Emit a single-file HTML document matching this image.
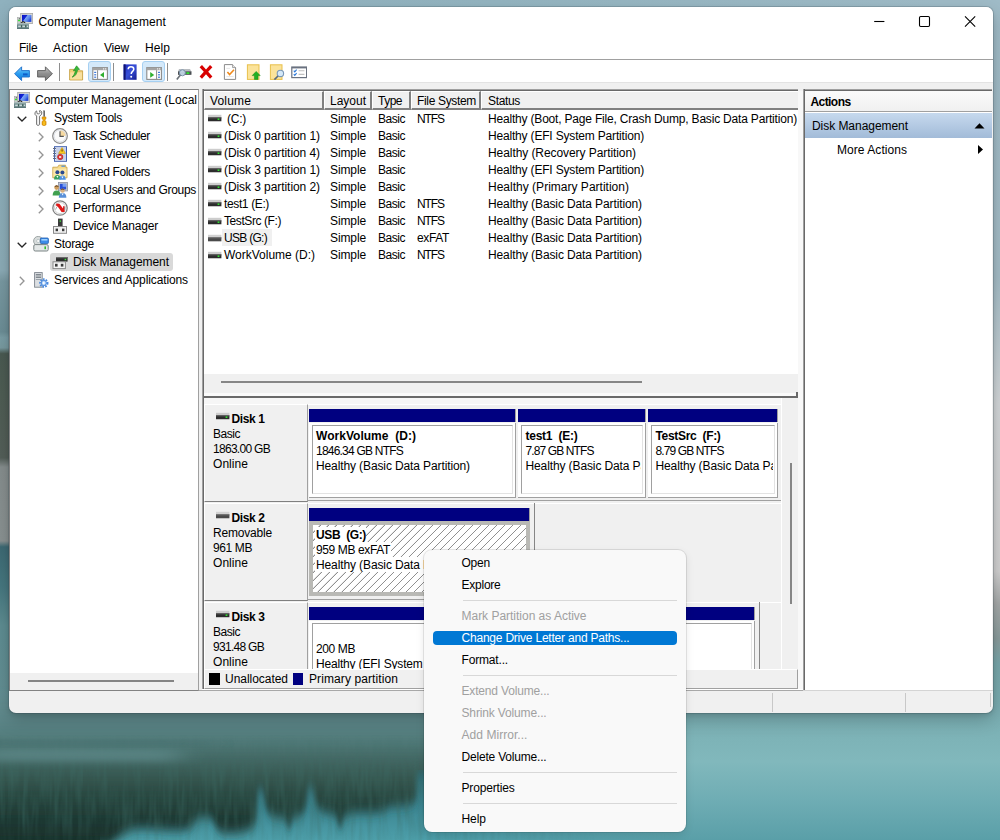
<!DOCTYPE html>
<html><head><meta charset="utf-8"><title>Computer Management</title>
<style>
html,body{margin:0;padding:0;}
body{width:1000px;height:840px;overflow:hidden;position:relative;background:#7fa5ad;font-family:"Liberation Sans",sans-serif;font-size:12px;color:#000;}
.a{position:absolute;}
.t{position:absolute;white-space:nowrap;line-height:16px;height:16px;}
#wp{left:0;top:0;width:1000px;height:840px;}
#frame{left:9px;top:7px;width:984px;height:706px;border-radius:7px;background:#f0f0f0;box-shadow:0 0 0 1px rgba(40,60,70,.20),0 7px 18px rgba(0,0,0,.20),0 2px 4px rgba(0,0,0,.10);}
#win,#menu,#clip3{left:0;top:0;width:1000px;height:840px;}
#clip3{clip-path:inset(404px 218px 171px 204px);}
.w{background:#fff;}

.hc{position:absolute;top:91px;height:19px;box-sizing:border-box;background:#f0f0f0;border-top:1px solid #fff;border-left:1px solid #fff;border-right:2px solid #808080;border-bottom:2px solid #808080;}
.dl{position:absolute;left:204px;width:104px;height:98px;box-sizing:border-box;background:#f0f0f0;border-left:1px solid #fff;border-top:1px solid #fff;border-right:1px solid #a0a0a0;border-bottom:1px solid #808080;}
.ph{position:absolute;height:13px;background:#000080;border-right:1px solid #a0a0a0;box-sizing:border-box;}
.pb{position:absolute;height:75px;background:#fff;box-sizing:border-box;border-right:1px solid #a0a0a0;border-bottom:1px solid #a0a0a0;}
.pb i{position:absolute;left:3px;top:2px;right:2px;bottom:3px;border-left:1px solid #a0a0a0;border-top:1px solid #a0a0a0;border-right:1px solid #e3e3e3;border-bottom:1px solid #e3e3e3;}
.pbh{position:absolute;height:75px;box-sizing:border-box;border:4px solid #b9b9b5;background:#fff repeating-linear-gradient(135deg,#fff 0,#fff 4.9px,#909090 5px,#909090 5.66px);}
.ms{position:absolute;left:463px;width:214px;height:1px;background:#d8d8d8;}
</style></head><body>
<div id="wp" class="a"><svg width="1000" height="840" viewBox="0 0 1000 840" style="position:absolute;left:0;top:0">
<defs>
<linearGradient id="wsky" x1="0" y1="0" x2="1" y2="0"><stop offset="0" stop-color="#8fb1be"/><stop offset=".5" stop-color="#93b4c0"/><stop offset="1" stop-color="#a0bcc8"/></linearGradient>
<linearGradient id="wleft" x1="0" y1="0" x2="0" y2="1">
<stop offset="0" stop-color="#8fb1be"/><stop offset=".322" stop-color="#8cacb7"/><stop offset=".335" stop-color="#7999a2"/><stop offset=".395" stop-color="#6c8e96"/><stop offset=".402" stop-color="#7a9ea6"/><stop offset=".414" stop-color="#789aa0"/><stop offset=".421" stop-color="#4a5a52"/><stop offset=".47" stop-color="#4f5d54"/><stop offset=".545" stop-color="#545f59"/><stop offset=".556" stop-color="#868e8e"/><stop offset=".644" stop-color="#8a9292"/><stop offset=".651" stop-color="#3d6a74"/><stop offset=".70" stop-color="#477880"/><stop offset=".745" stop-color="#5e8d92"/><stop offset=".85" stop-color="#648f93"/><stop offset="1" stop-color="#5e898c"/></linearGradient>
<linearGradient id="wright" x1="0" y1="0" x2="0" y2="1">
<stop offset="0" stop-color="#9fbbc7"/><stop offset=".33" stop-color="#a4bcc6"/><stop offset=".48" stop-color="#d2d6d8"/><stop offset=".68" stop-color="#d0d0d0"/><stop offset=".72" stop-color="#a4a8a8"/><stop offset=".76" stop-color="#8a9c9c"/><stop offset=".79" stop-color="#78a6aa"/><stop offset=".86" stop-color="#7aaeb2"/><stop offset="1" stop-color="#80b4b8"/></linearGradient>
<linearGradient id="wbotL" gradientUnits="userSpaceOnUse" x1="0" y1="705" x2="0" y2="840">
<stop offset="0" stop-color="#628c8f"/><stop offset=".15" stop-color="#5a8486"/><stop offset=".3" stop-color="#4d7674"/><stop offset=".41" stop-color="#426662"/><stop offset=".52" stop-color="#375952"/><stop offset=".63" stop-color="#2d4c45"/><stop offset=".74" stop-color="#24413a"/><stop offset=".85" stop-color="#1e3832"/><stop offset="1" stop-color="#19312b"/></linearGradient>
<linearGradient id="wbotR" gradientUnits="userSpaceOnUse" x1="0" y1="705" x2="0" y2="840">
<stop offset="0" stop-color="#79abb0"/><stop offset=".14" stop-color="#7bb0b4"/><stop offset=".42" stop-color="#81b8bc"/><stop offset=".7" stop-color="#6fadb4"/><stop offset="1" stop-color="#5a9fa8"/></linearGradient>
<linearGradient id="wteal" gradientUnits="userSpaceOnUse" x1="0" y1="770" x2="0" y2="840">
<stop offset="0" stop-color="#2f6a73"/><stop offset=".5" stop-color="#3b8490"/><stop offset="1" stop-color="#4d9faa"/></linearGradient>
<linearGradient id="wfade" gradientUnits="userSpaceOnUse" x1="430" y1="0" x2="690" y2="0"><stop offset="0" stop-color="#fff" stop-opacity="0"/><stop offset="1" stop-color="#fff" stop-opacity="1"/></linearGradient>
<linearGradient id="wfadeL" gradientUnits="userSpaceOnUse" x1="0" y1="0" x2="330" y2="0"><stop offset="0" stop-color="#6a979b" stop-opacity=".55"/><stop offset="1" stop-color="#6a979b" stop-opacity="0"/></linearGradient>
<mask id="wm"><rect x="420" y="700" width="580" height="140" fill="url(#wfade)"/></mask>
<filter id="wb6" x="-10%" y="-30%" width="120%" height="160%"><feGaussianBlur stdDeviation="2.2 6"/></filter>
<filter id="wb3" x="-20%" y="-100%" width="140%" height="300%"><feGaussianBlur stdDeviation="14 3.5"/></filter>
<filter id="wn" x="0" y="0" width="100%" height="100%"><feTurbulence type="fractalNoise" baseFrequency="0.22 0.025" numOctaves="2" seed="7"/><feColorMatrix type="matrix" values="0 0 0 0 0.05  0 0 0 0 0.16  0 0 0 0 0.14  1.6 0 0 0 -0.55"/></filter>
<linearGradient id="wnf" gradientUnits="userSpaceOnUse" x1="0" y1="735" x2="0" y2="840"><stop offset="0" stop-color="#fff" stop-opacity="0"/><stop offset=".35" stop-color="#fff" stop-opacity="1"/><stop offset=".8" stop-color="#fff" stop-opacity="1"/><stop offset="1" stop-color="#fff" stop-opacity=".5"/></linearGradient>
<linearGradient id="wnx" gradientUnits="userSpaceOnUse" x1="400" y1="0" x2="600" y2="0"><stop offset="0" stop-color="#000" stop-opacity="0"/><stop offset="1" stop-color="#000" stop-opacity="1"/></linearGradient>
<mask id="wnm"><rect x="0" y="735" width="700" height="105" fill="url(#wnf)"/><rect x="400" y="735" width="300" height="105" fill="url(#wnx)"/></mask>
</defs>
<rect width="1000" height="840" fill="url(#wsky)"/>
<rect x="0" y="0" width="60" height="840" fill="url(#wleft)"/>
<rect x="940" y="0" width="60" height="840" fill="url(#wright)"/>
<!-- bottom water -->
<rect x="0" y="705" width="1000" height="135" fill="url(#wbotL)"/>
<rect x="0" y="705" width="330" height="70" fill="url(#wfadeL)"/>
<rect x="100" y="770" width="600" height="70" fill="url(#wteal)"/>
<!-- dark reflection silhouette -->
<path filter="url(#wb6)" fill="url(#wbotL)" d="M-20 700 L720 700 L720 762 L470 766 L424 770 L417 772 L416 800 C412 806 396 806 390 806 C386 812 372 813 362 812 C352 812 346 814 343 818 L342 826 L338 826 L337 816 C330 812 320 812 316 806 L313 788 L308 786 L306 808 C302 816 296 817 292 817 L291 827 L287 827 L286 818 C278 818 268 816 266 808 L263 790 L258 788 L256 822 C250 832 236 834 222 832 C216 830 214 822 212 819 C206 816 200 817 196 820 C192 828 186 830 176 830 C160 830 148 827 132 829 C124 832 118 838 108 846 L-20 846 Z"/>
<rect x="0" y="705" width="1000" height="135" fill="url(#wbotR)" mask="url(#wm)"/>
<g mask="url(#wnm)"><rect x="0" y="735" width="700" height="105" filter="url(#wn)" opacity=".5"/></g>
<!-- streaks -->
<rect x="-20" y="749" width="200" height="13" fill="#74a4a8" opacity=".38" filter="url(#wb3)"/>
<rect x="-20" y="742" width="230" height="3" fill="#3f6466" opacity=".4" filter="url(#wb3)"/>
</svg>
</div>
<div id="frame" class="a"></div>
<div id="win" class="a">
<!-- title + menu + toolbar -->
<div class="a w" style="left:9px;top:7px;width:984px;height:52px;border-radius:7px 7px 0 0"></div>
<div class="a" style="left:9px;top:59px;width:984px;height:1px;background:#a0a0a0"></div>
<div class="a w" style="left:9px;top:60px;width:984px;height:22px"></div>
<div class="a" style="left:9px;top:82px;width:984px;height:1px;background:#e3e3e3"></div>
<svg class="a" style="left:17px;top:13px" width="16" height="16" viewBox="0 0 16 16"><defs><linearGradient id="gsca" x1="0" y1="0" x2="1" y2=".55"><stop offset="0" stop-color="#0a12c4"/><stop offset=".42" stop-color="#1426d4"/><stop offset=".5" stop-color="#7ea6f4"/><stop offset=".75" stop-color="#5c88ec"/><stop offset="1" stop-color="#2448d8"/></linearGradient></defs><rect x="3.7" y="0.4" width="12" height="10" fill="#dadad6" stroke="#a4a4a4" stroke-width=".8"/><rect x="5" y="1.9" width="9.4" height="7" fill="url(#gsca)"/><rect x="0.3" y="4.4" width="3" height="6" fill="#cacccc" stroke="#9aa0a0" stroke-width=".5"/><rect x="1.9" y="5.3" width="1" height="1" fill="#4a4a4a"/><rect x="1" y="6.8" width="2" height="1.4" fill="#38e038"/><path d="M3 10.5 L5.4 8.2 L7 8.2 L9.2 10.5 L7.6 10.5 L6.4 9.3 L5.9 9.3 L4.6 10.5 Z" fill="#26261e"/><rect x="0" y="10.2" width="11.9" height="5.8" fill="#6c898b"/><rect x="0" y="10.2" width="11.9" height="1.2" fill="#b4c4c4"/><rect x="0" y="15.2" width="11.9" height=".8" fill="#587274"/><rect x="1.2" y="12.6" width="2.6" height="1.5" fill="#c8d8d8"/><rect x="5.4" y="12.6" width="2.6" height="1.5" fill="#c8d8d8"/><rect x="9.5" y="12.6" width="1.6" height="1.5" fill="#c8d8d8"/><rect x="4" y="12.2" width="1" height="2.2" fill="#385a50"/><rect x="8.3" y="12.2" width="1" height="2.2" fill="#385a50"/></svg>
<svg class="a" style="left:870px;top:12px" width="110" height="20" viewBox="0 0 110 20"><path d="M4.2 9.5 H14.4" stroke="#000" stroke-width="1.1"/><rect x="49.5" y="4.5" width="10" height="10" rx="1.2" fill="none" stroke="#000" stroke-width="1.1"/><path d="M95 4.4 L105.2 14.6 M105.2 4.4 L95 14.6" stroke="#000" stroke-width="1.1"/></svg>
<svg class="a" style="left:14px;top:64.5px" width="16" height="16" viewBox="0 0 16 16"><defs><linearGradient id="gbk" x1="0" y1="0" x2="0" y2="1"><stop offset="0" stop-color="#7ed0fa"/><stop offset=".5" stop-color="#2a9cf0"/><stop offset="1" stop-color="#1478d8"/></linearGradient></defs><path d="M0.6 8.8 L7.6 1.8 L7.6 5.6 L15.4 5.6 L15.4 12 L7.6 12 L7.6 15.6 Z" fill="url(#gbk)" stroke="#1a6cc8" stroke-width=".9" stroke-linejoin="round"/><rect x="9" y="8.4" width="4.6" height="2" fill="#0a50c0" opacity=".8"/></svg>
<svg class="a" style="left:37px;top:64.5px" width="16" height="16" viewBox="0 0 16 16"><defs><linearGradient id="gfw" x1="0" y1="0" x2="0" y2="1"><stop offset="0" stop-color="#c8c8c8"/><stop offset=".5" stop-color="#8e8e8e"/><stop offset="1" stop-color="#787878"/></linearGradient></defs><path d="M15.4 8.8 L8.4 1.8 L8.4 5.6 L0.6 5.6 L0.6 12 L8.4 12 L8.4 15.6 Z" fill="url(#gfw)" stroke="#5a5a5a" stroke-width=".9" stroke-linejoin="round"/></svg>
<div class="a" style="left:59px;top:63px;width:1px;height:18px;background:#8e8e8e"></div>
<div class="a" style="left:113px;top:63px;width:1px;height:18px;background:#8e8e8e"></div>
<div class="a" style="left:167px;top:63px;width:1px;height:18px;background:#8e8e8e"></div>
<svg class="a" style="left:68px;top:64.5px" width="16" height="16" viewBox="0 0 16 16"><path d="M1.6 4.4 L6.2 4.4 L7.4 5.8 L14.6 5.8 L14.6 15 L1.6 15 Z" fill="#f2cf78" stroke="#c29a3a" stroke-width=".8"/><rect x="2.2" y="7.4" width="11.8" height="7" fill="#f8e0a0"/><path d="M4 12.2 C6 11 6.6 8 7.6 5.4 L5.4 5.8 L8.6 0.8 L11.6 4.4 L9.6 4.6 C9 8.4 7.6 11.4 4 12.2 Z" fill="#38b838" stroke="#1c8a1c" stroke-width=".6"/></svg>
<div class="a" style="left:88px;top:61px;width:23px;height:21px;box-sizing:border-box;background:#d4e9fa;border:1px solid #a6d0f2;border-radius:3px"></div>
<div class="a" style="left:142px;top:61px;width:23px;height:21px;box-sizing:border-box;background:#d4e9fa;border:1px solid #a6d0f2;border-radius:3px"></div>
<svg class="a" style="left:92px;top:65px" width="16" height="16" viewBox="0 0 16 16"><rect x="0.8" y="2.6" width="14.6" height="11.8" fill="#fff" stroke="#8a8a8a" stroke-width="1.1"/><rect x="0.8" y="2.6" width="14.6" height="2.6" fill="#a4a4a4"/><rect x="11" y="3.4" width="1.2" height="1" fill="#fff"/><rect x="13" y="3.4" width="1.2" height="1" fill="#fff"/><path d="M5.6 5.2 V14.4" stroke="#8a8a8a" stroke-width="1"/><g fill="#3c78d8"><rect x="2.2" y="6.8" width="2" height="1.2"/><rect x="2.2" y="9.2" width="2" height="1.2"/><rect x="2.2" y="11.6" width="2" height="1.2"/></g><path d="M12 7 L12 12.8 L8 9.9 Z" fill="#30b030"/></svg>
<svg class="a" style="left:121.5px;top:64px" width="16" height="16" viewBox="0 0 16 16"><defs><linearGradient id="ghlc" x1="0" y1="0" x2="1" y2="1"><stop offset="0" stop-color="#1c2cc0"/><stop offset=".5" stop-color="#3850d8"/><stop offset="1" stop-color="#141c90"/></linearGradient></defs><rect x="1.6" y="0.4" width="13" height="15.4" fill="url(#ghlc)"/><rect x="1.6" y="0.4" width="2" height="15.4" fill="#101470"/><path d="M6.2 5.2 C6.2 2 11.8 2 11.8 5.2 C11.8 7.4 9.2 7.4 9.2 10" fill="none" stroke="#fff" stroke-width="1.5"/><circle cx="9.2" cy="12.8" r="1" fill="#fff"/></svg>
<svg class="a" style="left:146px;top:65px" width="16" height="16" viewBox="0 0 16 16"><rect x="0.8" y="2.6" width="14.6" height="11.8" fill="#fff" stroke="#8a8a8a" stroke-width="1.1"/><rect x="0.8" y="2.6" width="14.6" height="2.6" fill="#a4a4a4"/><rect x="11" y="3.4" width="1.2" height="1" fill="#fff"/><rect x="13" y="3.4" width="1.2" height="1" fill="#fff"/><path d="M10.6 5.2 V14.4" stroke="#8a8a8a" stroke-width="1"/><g fill="#3c78d8"><rect x="12" y="6.8" width="2" height="1.2"/><rect x="12" y="9.2" width="2" height="1.2"/><rect x="12" y="11.6" width="2" height="1.2"/></g><path d="M4.2 7 L4.2 12.8 L8.2 9.9 Z" fill="#30b030"/></svg>
<svg class="a" style="left:176px;top:64.5px" width="16" height="16" viewBox="0 0 16 16"><path d="M3 4 L14 4 L15.4 6.4 L15.4 9.4 L2 9.4 L2 6.4 Z" fill="#b8bcc0"/><rect x="2" y="6.4" width="13.4" height="3.4" fill="#4a4e52"/><rect x="10.4" y="7.2" width="3" height="1.8" fill="#30e030"/><circle cx="6.4" cy="7.8" r="3" fill="#cfe4f6" fill-opacity=".85" stroke="#7890a8" stroke-width="1"/><path d="M4.4 10 L0.8 14.6" stroke="#6a7076" stroke-width="1.6"/></svg>
<svg class="a" style="left:198.4px;top:64px" width="16" height="16" viewBox="0 0 16 16"><path d="M1.6 3.2 L4 1 L8 5.4 L12 1 L14.4 3.2 L10.2 7.8 L14.4 12.6 L12 14.8 L8 10.2 L4 14.8 L1.6 12.6 L5.8 7.8 Z" fill="#d80000"/></svg>
<svg class="a" style="left:221.6px;top:64px" width="16" height="16" viewBox="0 0 16 16"><path d="M2.4 0.6 L10.6 0.6 L13.6 3.6 L13.6 15.4 L2.4 15.4 Z" fill="#fff" stroke="#8a8a8a" stroke-width="1"/><path d="M10.6 0.6 L10.6 3.6 L13.6 3.6" fill="#e8e8e8" stroke="#8a8a8a" stroke-width=".8"/><path d="M5.4 8 L7.6 10.6 L12 5.8" fill="none" stroke="#f08a1c" stroke-width="1.6"/><path d="M4.4 12.6 H11.6 M4.4 4.4 H8" stroke="#e0e0e0" stroke-width=".8"/></svg>
<svg class="a" style="left:246px;top:64px" width="16" height="16" viewBox="0 0 16 16"><rect x="1.4" y="0.8" width="11.6" height="14.6" fill="#fbe39a" stroke="#e8c04c" stroke-width="1"/><path d="M10.2 7.4 L14.2 11.6 L12 11.6 L12 15.4 L8.4 15.4 L8.4 11.6 L6.2 11.6 Z" fill="#22b022" stroke="#148a14" stroke-width=".5"/></svg>
<svg class="a" style="left:268.8px;top:64px" width="16" height="16" viewBox="0 0 16 16"><rect x="1.4" y="0.8" width="11.6" height="14.6" fill="#fbe39a" stroke="#e8c04c" stroke-width="1"/><circle cx="11.4" cy="9.4" r="3.2" fill="#d4e8f8" stroke="#7a98b8" stroke-width="1.1"/><path d="M9 12 L5.4 15.6" stroke="#5a6a7a" stroke-width="1.7"/></svg>
<svg class="a" style="left:291px;top:64px" width="16" height="16" viewBox="0 0 16 16"><rect x="0.8" y="3" width="14.8" height="10.6" fill="#fff" stroke="#6a7280" stroke-width="1.2"/><rect x="0.8" y="3" width="14.8" height="1.4" fill="#6a7280"/><path d="M2.8 6.6 L3.8 7.8 L5.6 5.6 M2.8 10.2 L3.8 11.4 L5.6 9.2" fill="none" stroke="#2a78d8" stroke-width="1.1"/><path d="M7.6 6.8 H13.4 M7.6 10.4 H13.4" stroke="#c0c0c0" stroke-width="1.1"/></svg>
<!-- tree pane -->
<div class="a w" style="left:9px;top:89px;width:190px;height:584px;border-left:1px solid #828282;border-top:1px solid #828282;border-right:1px solid #a0a0a0;box-sizing:border-box"></div>
<div class="a" style="left:9px;top:673px;width:190px;height:18px;border-left:1px solid #828282;border-right:1px solid #a0a0a0;border-bottom:1px solid #828282;box-sizing:border-box;background:#f0f0f0"></div>
<div class="a" style="left:28px;top:680px;width:146px;height:2px;background:#858585"></div>
<div class="a" style="left:50px;top:253px;width:123px;height:18px;background:#d9d9d9;border-radius:3px"></div>
<!-- list pane -->
<!-- list+disk container sunken border -->
<div class="a" style="left:202px;top:89px;width:596px;height:2px;background:linear-gradient(#a0a0a0 50%,#696969 50%)"></div>
<div class="a" style="left:202px;top:89px;width:2px;height:601px;background:linear-gradient(90deg,#a0a0a0 50%,#696969 50%)"></div>
<div class="a" style="left:798px;top:91px;width:5px;height:598px;background:#f8f8f8"></div>
<div class="a w" style="left:204px;top:91px;width:594px;height:283px"></div>
<!-- header cells -->
<div class="hc" style="left:204px;width:120px"></div>
<div class="hc" style="left:324px;width:48px"></div>
<div class="hc" style="left:372px;width:39px"></div>
<div class="hc" style="left:411px;width:70px"></div>
<div class="hc" style="left:481px;width:317px;border-right:0"></div>
<!-- USB row highlight -->
<div class="a" style="left:222px;top:229px;width:50px;height:17px;background:#f0f0f0"></div>
<!-- h scrollbar -->
<div class="a" style="left:204px;top:374px;width:594px;height:19px;background:#f0f0f0"></div>
<div class="a" style="left:221px;top:381px;width:421px;height:2px;background:#868686"></div>
<!-- splitter -->
<div class="a" style="left:204px;top:393px;width:592px;height:3px;background:#fafafa"></div>
<div class="a" style="left:204px;top:396px;width:594px;height:2px;background:#696969"></div>
<div class="a" style="left:796px;top:392px;width:2px;height:6px;background:#696969"></div>

<!-- actions pane -->
<div class="a" style="left:803px;top:89px;width:189px;height:2px;background:linear-gradient(#a0a0a0 50%,#696969 50%)"></div>
<div class="a" style="left:803px;top:89px;width:2px;height:601px;background:linear-gradient(90deg,#a0a0a0 50%,#696969 50%)"></div>
<div class="a w" style="left:805px;top:91px;width:187px;height:599px"></div>
<div class="a" style="left:805px;top:91px;width:187px;height:20px;background:linear-gradient(#fafafa,#f0f0f0)"></div>
<div class="a" style="left:805px;top:111px;width:187px;height:1px;background:#a0a0a0"></div>
<div class="a" style="left:805px;top:113px;width:187px;height:25px;background:linear-gradient(#c6d9ee,#a2bbd8)"></div>
<svg class="a" style="left:974px;top:123px" width="12" height="6" viewBox="0 0 12 6"><path d="M0.5 5.5 L5.5 0.3 L10.5 5.5 Z" fill="#000"/></svg>
<svg class="a" style="left:978px;top:145px" width="6" height="10" viewBox="0 0 6 10"><path d="M0 0 L5 4.5 L0 9 Z" fill="#000"/></svg>

<!-- disk view -->
<div class="a" style="left:204px;top:398px;width:594px;height:271px;background:#f0f0f0"></div>
<div class="a" style="left:204px;top:398px;width:577px;height:6px;background:#f6f6f6"></div>
<div class="a" style="left:781px;top:398px;width:1px;height:271px;background:#fff"></div>
<div class="a" style="left:790px;top:463px;width:2px;height:141px;background:#868686"></div>
<div id="dclip" class="a" style="left:0;top:0;width:1000px;height:840px;clip-path:inset(404px 219px 171px 204px)">
<div class="a" style="left:204px;top:404px;width:577px;height:1px;background:#fff"></div>
<div class="a" style="left:307px;top:500px;width:474px;height:1px;background:#a0a0a0"></div>
<div class="dl" style="top:404px"></div>
<div class="ph" style="left:309px;top:409px;width:207px"></div>
<div class="pb" style="left:309px;top:423px;width:207px"><i></i></div>
<div class="ph" style="left:518px;top:409px;width:128px"></div>
<div class="pb" style="left:518px;top:423px;width:128px"><i></i></div>
<div class="ph" style="left:648px;top:409px;width:130px"></div>
<div class="pb" style="left:648px;top:423px;width:130px"><i></i></div>
<div class="a" style="left:204px;top:503px;width:577px;height:1px;background:#fff"></div>
<div class="a" style="left:307px;top:599px;width:228px;height:1px;background:#a0a0a0"></div>
<div class="dl" style="top:503px"></div>
<div class="a" style="left:534px;top:503px;width:1px;height:96px;background:#868686"></div>
<div class="ph" style="left:309px;top:508px;width:221px"></div>
<div class="pbh" style="left:309px;top:521px;width:221px"></div>
<div class="a" style="left:204px;top:602px;width:577px;height:1px;background:#fff"></div>
<div class="a" style="left:307px;top:698px;width:453px;height:1px;background:#a0a0a0"></div>
<div class="dl" style="top:602px"></div>
<div class="a" style="left:759px;top:602px;width:1px;height:96px;background:#868686"></div>
<div class="ph" style="left:309px;top:607px;width:123px"></div>
<div class="pb" style="left:309px;top:621px;width:123px"><i></i></div>
<div class="ph" style="left:434px;top:607px;width:321px"></div>
<div class="pb" style="left:434px;top:621px;width:321px"><i></i></div>
<div class="a w" style="left:315px;top:527px;width:51px;height:15px"></div>
<div class="a w" style="left:315px;top:542px;width:76px;height:15px"></div>
<div class="a w" style="left:315px;top:557px;width:110px;height:15px"></div>
</div>
<div class="a" style="left:204px;top:669px;width:594px;height:20px;box-sizing:border-box;background:#f0f0f0;border-top:1px solid #fff;border-left:1px solid #fff;border-right:1px solid #a0a0a0;border-bottom:1px solid #a0a0a0"></div>
<div class="a" style="left:202px;top:689px;width:601px;height:1px;background:#fff"></div>
<div class="a" style="left:209px;top:673px;width:11px;height:12px;background:#000"></div>
<div class="a" style="left:293px;top:673px;width:10px;height:12px;background:#000080"></div>
<!-- status bar -->
<div class="a" style="left:199px;top:690px;width:604px;height:1px;background:#a8a8a8"></div>
<div class="a" style="left:803px;top:690px;width:190px;height:1px;background:#d4d4d4"></div>
<div class="a" style="left:772px;top:693px;width:1px;height:19px;background:#c8c8c8"></div>
<div class="a" style="left:905px;top:693px;width:1px;height:19px;background:#c8c8c8"></div>
<div class="a" style="left:990px;top:693px;width:1px;height:14px;background:#c8c8c8"></div>

<svg class="a" style="left:14px;top:92px" width="16" height="16" viewBox="0 0 16 16"><defs><linearGradient id="gscb" x1="0" y1="0" x2="1" y2=".55"><stop offset="0" stop-color="#0a12c4"/><stop offset=".42" stop-color="#1426d4"/><stop offset=".5" stop-color="#7ea6f4"/><stop offset=".75" stop-color="#5c88ec"/><stop offset="1" stop-color="#2448d8"/></linearGradient></defs><rect x="3.7" y="0.4" width="12" height="10" fill="#dadad6" stroke="#a4a4a4" stroke-width=".8"/><rect x="5" y="1.9" width="9.4" height="7" fill="url(#gscb)"/><rect x="0.3" y="4.4" width="3" height="6" fill="#cacccc" stroke="#9aa0a0" stroke-width=".5"/><rect x="1.9" y="5.3" width="1" height="1" fill="#4a4a4a"/><rect x="1" y="6.8" width="2" height="1.4" fill="#38e038"/><path d="M3 10.5 L5.4 8.2 L7 8.2 L9.2 10.5 L7.6 10.5 L6.4 9.3 L5.9 9.3 L4.6 10.5 Z" fill="#26261e"/><rect x="0" y="10.2" width="11.9" height="5.8" fill="#6c898b"/><rect x="0" y="10.2" width="11.9" height="1.2" fill="#b4c4c4"/><rect x="0" y="15.2" width="11.9" height=".8" fill="#587274"/><rect x="1.2" y="12.6" width="2.6" height="1.5" fill="#c8d8d8"/><rect x="5.4" y="12.6" width="2.6" height="1.5" fill="#c8d8d8"/><rect x="9.5" y="12.6" width="1.6" height="1.5" fill="#c8d8d8"/><rect x="4" y="12.2" width="1" height="2.2" fill="#385a50"/><rect x="8.3" y="12.2" width="1" height="2.2" fill="#385a50"/></svg>
<svg class="a" style="left:17px;top:115.5px" width="10" height="6" viewBox="0 0 10 6"><path d="M0.7 0.8 L5 5 L9.3 0.8" fill="none" stroke="#262626" stroke-width="1.3"/></svg>
<svg class="a" style="left:34.4px;top:110px" width="16" height="16" viewBox="0 0 16 16"><path d="M2.6 0.9 L1 2.4 L1 4.4 L2.6 6 L2.6 14.6 Q4.1 16.4 5.6 14.6 L5.6 6.2 L7.6 4.4 L7.8 2 L6.4 0.5 L5.4 0.8 L6 2.6 L4.6 4 L3.2 3.6 L2.8 2.2 Z" fill="#f6f6f6" stroke="#707070" stroke-width="1" stroke-linejoin="round"/><path d="M9 0.4 L10.9 0.4 L10.9 6.8 L9.4 6.8 L9.4 1.4 Z" fill="#5c5c5c"/><path d="M8.1 6.9 L12 6.9 L12 9 L11 9.6 L11 10.8 L12.1 11.4 L12.1 14.8 Q10.1 16.6 8 14.8 L8 11.4 L9.2 10.8 L9.2 9.6 L8.1 9 Z" fill="#eda80c" stroke="#c47a00" stroke-width=".5"/><rect x="9.4" y="11.6" width="1.3" height="3.4" fill="#f8c830"/></svg>
<svg class="a" style="left:37.5px;top:131.7px" width="6" height="10" viewBox="0 0 6 10"><path d="M0.8 0.7 L5 5 L0.8 9.3" fill="none" stroke="#959595" stroke-width="1.35"/></svg>
<svg class="a" style="left:52px;top:128px" width="16" height="16" viewBox="0 0 16 16"><circle cx="8" cy="8" r="7.3" fill="#fafafa" stroke="#8c8c8c" stroke-width="1.3"/><path d="M8 8 L8 1.8 A6.2 6.2 0 0 1 14.2 8 Z" fill="#f6d9a0"/><circle cx="8" cy="8" r="5.9" fill="none" stroke="#d8dce4" stroke-width=".8"/><path d="M8 3.2 L8 8.3 L11.8 8.3" fill="none" stroke="#555" stroke-width="1.2"/></svg>
<svg class="a" style="left:37.5px;top:149.7px" width="6" height="10" viewBox="0 0 6 10"><path d="M0.8 0.7 L5 5 L0.8 9.3" fill="none" stroke="#959595" stroke-width="1.35"/></svg>
<svg class="a" style="left:52px;top:146px" width="16" height="16" viewBox="0 0 16 16"><rect x="2.5" y="0.7" width="12" height="14.6" fill="#e6ecf8" stroke="#4060b0" stroke-width="1"/><g stroke="#8ea2d0" stroke-width=".7"><path d="M4 3H14M4 5H14M4 7H14M4 9H14M4 11H14M4 13H14"/></g><g stroke="#606a80" stroke-width="1"><path d="M1 2.5H4M1 5H4M1 7.5H4M1 10H4M1 12.5H4"/></g><path d="M10 1.5 L13.4 7.4 L6.6 7.4 Z" fill="#ffd020" stroke="#c89000" stroke-width=".6"/><rect x="9.6" y="3.4" width=".9" height="2.2" fill="#402000"/><circle cx="8.2" cy="11" r="2.7" fill="#e03030" stroke="#a01010" stroke-width=".5"/><path d="M7.1 9.9 L9.3 12.1 M9.3 9.9 L7.1 12.1" stroke="#fff" stroke-width=".9"/></svg>
<svg class="a" style="left:37.5px;top:167.7px" width="6" height="10" viewBox="0 0 6 10"><path d="M0.8 0.7 L5 5 L0.8 9.3" fill="none" stroke="#959595" stroke-width="1.35"/></svg>
<svg class="a" style="left:52px;top:164px" width="16" height="16" viewBox="0 0 16 16"><path d="M0.8 3.2 L5.6 3.2 L6.8 1.2 L13.6 1.2 L13.6 3.2 L15 3.2 L15 13.8 L0.8 13.8 Z" fill="#f6d98a" stroke="#c8a040" stroke-width=".8"/><rect x="9.4" y="1.6" width="3.6" height="1.2" fill="#4a90e0"/><rect x="1.4" y="4.6" width="13" height="8.6" fill="#fbe7aa"/><circle cx="5.4" cy="8.3" r="2" fill="#2a4a90"/><path d="M2 15.6 Q2 11 5.4 11 Q8.8 11 8.8 15.6 Z" fill="#38a060"/><circle cx="10.4" cy="8.6" r="2" fill="#2a4a90"/><path d="M7.2 15.8 Q7.2 11.4 10.4 11.4 Q13.8 11.4 13.8 15.8 Z" fill="#5090e0"/><path d="M4.4 12 L5.4 14 L6.4 12Z M9.4 12.4 L10.4 14.4 L11.4 12.4Z" fill="#fff"/></svg>
<svg class="a" style="left:37.5px;top:185.7px" width="6" height="10" viewBox="0 0 6 10"><path d="M0.8 0.7 L5 5 L0.8 9.3" fill="none" stroke="#959595" stroke-width="1.35"/></svg>
<svg class="a" style="left:52px;top:182px" width="16" height="16" viewBox="0 0 16 16"><rect x="6.5" y="0.5" width="9" height="8.4" fill="#c8ccd4" stroke="#8a90a0" stroke-width=".8"/><rect x="7.8" y="1.8" width="6.4" height="5.6" fill="#2a50d8"/><rect x="10.6" y="1.8" width="3.6" height="3" fill="#7aa0f0"/><circle cx="4.6" cy="5.6" r="2.3" fill="#d0a060"/><path d="M2.3 5 Q4.6 1.6 6.9 5 Q4.6 3.8 2.3 5Z" fill="#604020"/><path d="M0.6 13.6 Q0.6 8.4 4.6 8.4 Q8.6 8.4 8.6 13.6 Z" fill="#40a050"/><circle cx="10.6" cy="8.6" r="2.2" fill="#d8b080"/><path d="M8.4 8 Q10.6 4.8 12.8 8 Q10.6 6.8 8.4 8Z" fill="#503018"/><path d="M6.8 15.8 Q6.8 11 10.6 11 Q14.4 11 14.4 15.8 Z" fill="#5a90d8"/><path d="M9.6 11.4 L10.6 13.6 L11.6 11.4Z" fill="#fff"/></svg>
<svg class="a" style="left:37.5px;top:203.7px" width="6" height="10" viewBox="0 0 6 10"><path d="M0.8 0.7 L5 5 L0.8 9.3" fill="none" stroke="#959595" stroke-width="1.35"/></svg>
<svg class="a" style="left:52px;top:200px" width="16" height="16" viewBox="0 0 16 16"><circle cx="8" cy="8" r="7.2" fill="#fff" stroke="#808080" stroke-width="1.3"/><circle cx="8" cy="8" r="5.6" fill="none" stroke="#c8c8c8" stroke-width=".8"/><path d="M3.8 5.2 L4.6 3.6 L7.4 3.8 L11 8.6 L11.2 6 L12.8 6.4 L12.6 12 L9.6 12 L6 7 Z" fill="#e01818"/><path d="M3.6 9.6 L4.8 6.8 M12.4 9.6 L12.6 7" stroke="#888" stroke-width=".7"/></svg>
<svg class="a" style="left:52px;top:218px" width="16" height="16" viewBox="0 0 16 16"><rect x="6" y="0.6" width="4.6" height="8" fill="#3a3a3a"/><rect x="7.6" y="2.4" width="1.4" height="1.4" fill="#40e040"/><rect x="1.5" y="8.5" width="13" height="6.8" fill="#f0f0f0" stroke="#8a8a8a" stroke-width="1"/><rect x="3.6" y="10.6" width="2.4" height="2.6" fill="#3a3a3a"/><rect x="10" y="10.6" width="2.4" height="2.6" fill="#3a3a3a"/></svg>
<svg class="a" style="left:17px;top:241.5px" width="10" height="6" viewBox="0 0 10 6"><path d="M0.7 0.8 L5 5 L9.3 0.8" fill="none" stroke="#262626" stroke-width="1.3"/></svg>
<svg class="a" style="left:33px;top:236px" width="16" height="16" viewBox="0 0 16 16"><circle cx="5.2" cy="5" r="4.6" fill="#d8dcdc" stroke="#8c9494" stroke-width=".8"/><circle cx="5.2" cy="5" r="1.6" fill="#f8f8f8" stroke="#9aa" stroke-width=".5"/><rect x="7.4" y="2" width="8" height="5.6" rx="1" fill="#3c8ce8" stroke="#1c5cb0" stroke-width=".8"/><rect x="8.4" y="3" width="6" height="1.6" fill="#9cd0ff"/><rect x="0.8" y="8.6" width="14.4" height="6.4" rx="1.4" fill="#e4e8e8" stroke="#7a8484" stroke-width="1"/><rect x="11.4" y="10.4" width="1.6" height="2.8" fill="#30c030"/></svg>
<svg class="a" style="left:52px;top:254px" width="16" height="16" viewBox="0 0 16 16"><rect x="4" y="3" width="11.6" height="4.6" fill="#2e2e2e"/><rect x="4" y="3" width="11.6" height="1.2" fill="#6a6a6a"/><rect x="12.6" y="4.8" width="1.6" height="1.4" fill="#40e040"/><rect x="1" y="7.8" width="12.4" height="6.8" fill="#f4f4f4" stroke="#8a8a8a" stroke-width="1"/><rect x="3" y="9.8" width="2.6" height="2.8" fill="#3a3a3a"/><rect x="8.8" y="9.8" width="2.6" height="2.8" fill="#3a3a3a"/></svg>
<svg class="a" style="left:18.5px;top:275.7px" width="6" height="10" viewBox="0 0 6 10"><path d="M0.8 0.7 L5 5 L0.8 9.3" fill="none" stroke="#959595" stroke-width="1.35"/></svg>
<svg class="a" style="left:33px;top:272px" width="16" height="16" viewBox="0 0 16 16"><rect x="1.6" y="0.6" width="7.6" height="14.6" fill="#dcdfe2" stroke="#7c848c" stroke-width=".9"/><rect x="2.8" y="2.2" width="5.2" height="1.2" fill="#6c747c"/><rect x="2.8" y="4.6" width="5.2" height="1.2" fill="#6c747c"/><rect x="2.8" y="7" width="5.2" height="1" fill="#9aa2aa"/><circle cx="10.8" cy="11" r="3.7" fill="none" stroke="#4a8ae0" stroke-width="2" stroke-dasharray="1.6 1.1"/><circle cx="10.8" cy="11" r="2.6" fill="#bcd8f8" stroke="#4a8ae0" stroke-width="1"/><circle cx="10.8" cy="11" r="1" fill="#fff"/></svg>
<svg class="a" style="left:206.5px;top:111.2px" width="16" height="16" viewBox="0 0 16 16"><rect x="1" y="3.8" width="13.4" height="2.8" fill="#cdcdcd"/><rect x="1" y="6.4" width="13.4" height="3.6" fill="#2c2c2c"/><rect x="1" y="6.4" width="13.4" height="1" fill="#555"/><rect x="10.6" y="7.4" width="1.8" height="1.6" fill="#30e030"/><rect x="1" y="10" width="13.4" height=".8" fill="#b8b8b8"/></svg>
<svg class="a" style="left:206.5px;top:128.25px" width="16" height="16" viewBox="0 0 16 16"><rect x="1" y="3.8" width="13.4" height="2.8" fill="#cdcdcd"/><rect x="1" y="6.4" width="13.4" height="3.6" fill="#2c2c2c"/><rect x="1" y="6.4" width="13.4" height="1" fill="#555"/><rect x="10.6" y="7.4" width="1.8" height="1.6" fill="#30e030"/><rect x="1" y="10" width="13.4" height=".8" fill="#b8b8b8"/></svg>
<svg class="a" style="left:206.5px;top:145.3px" width="16" height="16" viewBox="0 0 16 16"><rect x="1" y="3.8" width="13.4" height="2.8" fill="#cdcdcd"/><rect x="1" y="6.4" width="13.4" height="3.6" fill="#2c2c2c"/><rect x="1" y="6.4" width="13.4" height="1" fill="#555"/><rect x="10.6" y="7.4" width="1.8" height="1.6" fill="#30e030"/><rect x="1" y="10" width="13.4" height=".8" fill="#b8b8b8"/></svg>
<svg class="a" style="left:206.5px;top:162.35px" width="16" height="16" viewBox="0 0 16 16"><rect x="1" y="3.8" width="13.4" height="2.8" fill="#cdcdcd"/><rect x="1" y="6.4" width="13.4" height="3.6" fill="#2c2c2c"/><rect x="1" y="6.4" width="13.4" height="1" fill="#555"/><rect x="10.6" y="7.4" width="1.8" height="1.6" fill="#30e030"/><rect x="1" y="10" width="13.4" height=".8" fill="#b8b8b8"/></svg>
<svg class="a" style="left:206.5px;top:179.4px" width="16" height="16" viewBox="0 0 16 16"><rect x="1" y="3.8" width="13.4" height="2.8" fill="#cdcdcd"/><rect x="1" y="6.4" width="13.4" height="3.6" fill="#2c2c2c"/><rect x="1" y="6.4" width="13.4" height="1" fill="#555"/><rect x="10.6" y="7.4" width="1.8" height="1.6" fill="#30e030"/><rect x="1" y="10" width="13.4" height=".8" fill="#b8b8b8"/></svg>
<svg class="a" style="left:206.5px;top:196.45px" width="16" height="16" viewBox="0 0 16 16"><rect x="1" y="3.8" width="13.4" height="2.8" fill="#cdcdcd"/><rect x="1" y="6.4" width="13.4" height="3.6" fill="#2c2c2c"/><rect x="1" y="6.4" width="13.4" height="1" fill="#555"/><rect x="10.6" y="7.4" width="1.8" height="1.6" fill="#30e030"/><rect x="1" y="10" width="13.4" height=".8" fill="#b8b8b8"/></svg>
<svg class="a" style="left:206.5px;top:213.5px" width="16" height="16" viewBox="0 0 16 16"><rect x="1" y="3.8" width="13.4" height="2.8" fill="#cdcdcd"/><rect x="1" y="6.4" width="13.4" height="3.6" fill="#2c2c2c"/><rect x="1" y="6.4" width="13.4" height="1" fill="#555"/><rect x="10.6" y="7.4" width="1.8" height="1.6" fill="#30e030"/><rect x="1" y="10" width="13.4" height=".8" fill="#b8b8b8"/></svg>
<svg class="a" style="left:206.5px;top:230.55px" width="16" height="16" viewBox="0 0 16 16"><rect x="1" y="3.8" width="13.4" height="2.8" fill="#d2d2d2"/><rect x="1" y="6.4" width="13.4" height="3.6" fill="#4a4a4a"/><rect x="1" y="6.4" width="13.4" height="1" fill="#6a6a6a"/><rect x="1" y="10" width="13.4" height=".8" fill="#b8b8b8"/></svg>
<svg class="a" style="left:206.5px;top:247.6px" width="16" height="16" viewBox="0 0 16 16"><rect x="1" y="3.8" width="13.4" height="2.8" fill="#cdcdcd"/><rect x="1" y="6.4" width="13.4" height="3.6" fill="#2c2c2c"/><rect x="1" y="6.4" width="13.4" height="1" fill="#555"/><rect x="10.6" y="7.4" width="1.8" height="1.6" fill="#30e030"/><rect x="1" y="10" width="13.4" height=".8" fill="#b8b8b8"/></svg>
<svg class="a" style="left:214.5px;top:408.8px" width="16" height="16" viewBox="0 0 16 16"><rect x="1" y="3.8" width="13.4" height="2.8" fill="#cdcdcd"/><rect x="1" y="6.4" width="13.4" height="3.6" fill="#2c2c2c"/><rect x="1" y="6.4" width="13.4" height="1" fill="#555"/><rect x="10.6" y="7.4" width="1.8" height="1.6" fill="#30e030"/><rect x="1" y="10" width="13.4" height=".8" fill="#b8b8b8"/></svg>
<svg class="a" style="left:214.5px;top:507.8px" width="16" height="16" viewBox="0 0 16 16"><rect x="1" y="3.8" width="13.4" height="2.8" fill="#d2d2d2"/><rect x="1" y="6.4" width="13.4" height="3.6" fill="#4a4a4a"/><rect x="1" y="6.4" width="13.4" height="1" fill="#6a6a6a"/><rect x="1" y="10" width="13.4" height=".8" fill="#b8b8b8"/></svg>
<svg class="a" style="left:214.5px;top:606.8px" width="16" height="16" viewBox="0 0 16 16"><rect x="1" y="3.8" width="13.4" height="2.8" fill="#cdcdcd"/><rect x="1" y="6.4" width="13.4" height="3.6" fill="#2c2c2c"/><rect x="1" y="6.4" width="13.4" height="1" fill="#555"/><rect x="10.6" y="7.4" width="1.8" height="1.6" fill="#30e030"/><rect x="1" y="10" width="13.4" height=".8" fill="#b8b8b8"/></svg>
<span class="t" style="left:38.5px;top:13.5px;letter-spacing:0.075px;">Computer Management</span>
<span class="t" style="left:19px;top:39.5px;letter-spacing:-0.211px;">File</span>
<span class="t" style="left:53px;top:39.5px;letter-spacing:0.273px;">Action</span>
<span class="t" style="left:104px;top:39.5px;letter-spacing:-0.199px;">View</span>
<span class="t" style="left:145px;top:39.5px;letter-spacing:0.078px;">Help</span>
<span class="t" style="left:35px;top:92px;letter-spacing:-0.004px;width:163px;overflow:hidden;">Computer Management (Local</span>
<span class="t" style="left:54px;top:110px;letter-spacing:-0.262px;">System Tools</span>
<span class="t" style="left:73px;top:128px;letter-spacing:-0.360px;">Task Scheduler</span>
<span class="t" style="left:73px;top:146px;letter-spacing:-0.290px;">Event Viewer</span>
<span class="t" style="left:73px;top:164px;letter-spacing:-0.360px;">Shared Folders</span>
<span class="t" style="left:73px;top:182px;letter-spacing:-0.291px;">Local Users and Groups</span>
<span class="t" style="left:73px;top:200px;letter-spacing:-0.064px;">Performance</span>
<span class="t" style="left:73px;top:218px;letter-spacing:-0.170px;">Device Manager</span>
<span class="t" style="left:54px;top:236px;letter-spacing:-0.290px;">Storage</span>
<span class="t" style="left:73px;top:254px;letter-spacing:-0.048px;">Disk Management</span>
<span class="t" style="left:54px;top:272px;letter-spacing:-0.110px;">Services and Applications</span>
<span class="t" style="left:210px;top:93px;letter-spacing:0.161px;">Volume</span>
<span class="t" style="left:330px;top:93px;letter-spacing:-0.005px;">Layout</span>
<span class="t" style="left:378px;top:93px;letter-spacing:-0.504px;">Type</span>
<span class="t" style="left:417px;top:93px;letter-spacing:-0.335px;">File System</span>
<span class="t" style="left:488px;top:93px;letter-spacing:-0.339px;">Status</span>
<span class="t" style="left:224px;top:110.5px;letter-spacing:-0.266px;">&nbsp;(C:)</span>
<span class="t" style="left:330px;top:110.5px;letter-spacing:-0.115px;">Simple</span>
<span class="t" style="left:378px;top:110.5px;letter-spacing:-0.469px;">Basic</span>
<span class="t" style="left:417px;top:110.5px;letter-spacing:-1.086px;">NTFS</span>
<span class="t" style="left:488px;top:110.5px;letter-spacing:-0.189px;">Healthy (Boot, Page File, Crash Dump, Basic Data Partition)</span>
<span class="t" style="left:224px;top:127.55px;letter-spacing:-0.069px;">(Disk 0 partition 1)</span>
<span class="t" style="left:330px;top:127.55px;letter-spacing:-0.115px;">Simple</span>
<span class="t" style="left:378px;top:127.55px;letter-spacing:-0.469px;">Basic</span>
<span class="t" style="left:488px;top:127.55px;letter-spacing:-0.180px;">Healthy (EFI System Partition)</span>
<span class="t" style="left:224px;top:144.6px;letter-spacing:-0.069px;">(Disk 0 partition 4)</span>
<span class="t" style="left:330px;top:144.6px;letter-spacing:-0.115px;">Simple</span>
<span class="t" style="left:378px;top:144.6px;letter-spacing:-0.469px;">Basic</span>
<span class="t" style="left:488px;top:144.6px;letter-spacing:-0.074px;">Healthy (Recovery Partition)</span>
<span class="t" style="left:224px;top:161.65px;letter-spacing:-0.069px;">(Disk 3 partition 1)</span>
<span class="t" style="left:330px;top:161.65px;letter-spacing:-0.115px;">Simple</span>
<span class="t" style="left:378px;top:161.65px;letter-spacing:-0.469px;">Basic</span>
<span class="t" style="left:488px;top:161.65px;letter-spacing:-0.180px;">Healthy (EFI System Partition)</span>
<span class="t" style="left:224px;top:178.7px;letter-spacing:-0.069px;">(Disk 3 partition 2)</span>
<span class="t" style="left:330px;top:178.7px;letter-spacing:-0.115px;">Simple</span>
<span class="t" style="left:378px;top:178.7px;letter-spacing:-0.469px;">Basic</span>
<span class="t" style="left:488px;top:178.7px;letter-spacing:0.011px;">Healthy (Primary Partition)</span>
<span class="t" style="left:224px;top:195.75px;letter-spacing:-0.369px;">test1 (E:)</span>
<span class="t" style="left:330px;top:195.75px;letter-spacing:-0.115px;">Simple</span>
<span class="t" style="left:378px;top:195.75px;letter-spacing:-0.469px;">Basic</span>
<span class="t" style="left:417px;top:195.75px;letter-spacing:-1.086px;">NTFS</span>
<span class="t" style="left:488px;top:195.75px;letter-spacing:-0.114px;">Healthy (Basic Data Partition)</span>
<span class="t" style="left:224px;top:212.8px;letter-spacing:-0.417px;">TestSrc (F:)</span>
<span class="t" style="left:330px;top:212.8px;letter-spacing:-0.115px;">Simple</span>
<span class="t" style="left:378px;top:212.8px;letter-spacing:-0.469px;">Basic</span>
<span class="t" style="left:417px;top:212.8px;letter-spacing:-1.086px;">NTFS</span>
<span class="t" style="left:488px;top:212.8px;letter-spacing:-0.114px;">Healthy (Basic Data Partition)</span>
<span class="t" style="left:224px;top:229.85px;letter-spacing:-0.709px;">USB (G:)</span>
<span class="t" style="left:330px;top:229.85px;letter-spacing:-0.115px;">Simple</span>
<span class="t" style="left:378px;top:229.85px;letter-spacing:-0.469px;">Basic</span>
<span class="t" style="left:417px;top:229.85px;letter-spacing:-0.359px;">exFAT</span>
<span class="t" style="left:488px;top:229.85px;letter-spacing:-0.114px;">Healthy (Basic Data Partition)</span>
<span class="t" style="left:224px;top:246.9px;letter-spacing:-0.009px;">WorkVolume (D:)</span>
<span class="t" style="left:330px;top:246.9px;letter-spacing:-0.115px;">Simple</span>
<span class="t" style="left:378px;top:246.9px;letter-spacing:-0.469px;">Basic</span>
<span class="t" style="left:417px;top:246.9px;letter-spacing:-1.086px;">NTFS</span>
<span class="t" style="left:488px;top:246.9px;letter-spacing:-0.114px;">Healthy (Basic Data Partition)</span>
<span class="t" style="left:810.5px;top:94px;letter-spacing:-0.574px;font-weight:bold;">Actions</span>
<span class="t" style="left:812px;top:117.5px;letter-spacing:-0.048px;">Disk Management</span>
<span class="t" style="left:837px;top:141.5px;letter-spacing:0.052px;">More Actions</span>
<span class="t" style="left:231.5px;top:411px;letter-spacing:-0.393px;font-weight:bold;">Disk 1</span>
<span class="t" style="left:213px;top:426px;letter-spacing:-0.469px;">Basic</span>
<span class="t" style="left:213px;top:441px;letter-spacing:-0.706px;">1863.00 GB</span>
<span class="t" style="left:213px;top:456px;letter-spacing:0.052px;">Online</span>
<span class="t" style="left:231.5px;top:510px;letter-spacing:-0.393px;font-weight:bold;">Disk 2</span>
<span class="t" style="left:213px;top:525px;letter-spacing:-0.189px;">Removable</span>
<span class="t" style="left:213px;top:540px;letter-spacing:-0.393px;">961 MB</span>
<span class="t" style="left:213px;top:555px;letter-spacing:0.052px;">Online</span>
<span class="t" style="left:231.5px;top:609px;letter-spacing:-0.393px;font-weight:bold;">Disk 3</span>
<span class="t" style="left:213px;top:624px;letter-spacing:-0.469px;">Basic</span>
<span class="t" style="left:213px;top:639px;letter-spacing:-0.708px;">931.48 GB</span>
<span class="t" style="left:316px;top:428px;letter-spacing:0.027px;font-weight:bold;">WorkVolume &nbsp;(D:)</span>
<span class="t" style="left:316px;top:443px;letter-spacing:-0.781px;">1846.34 GB NTFS</span>
<span class="t" style="left:316px;top:458px;letter-spacing:-0.114px;">Healthy (Basic Data Partition)</span>
<span class="t" style="left:525.5px;top:428px;letter-spacing:-0.244px;font-weight:bold;">test1 &nbsp;(E:)</span>
<span class="t" style="left:525.5px;top:443px;letter-spacing:-0.892px;">7.87 GB NTFS</span>
<span class="t" style="left:525.5px;top:458px;letter-spacing:-0.114px;width:115px;overflow:hidden;">Healthy (Basic Data Partition)</span>
<span class="t" style="left:655.5px;top:428px;letter-spacing:-0.317px;font-weight:bold;">TestSrc &nbsp;(F:)</span>
<span class="t" style="left:655.5px;top:443px;letter-spacing:-0.892px;">8.79 GB NTFS</span>
<span class="t" style="left:655.5px;top:458px;letter-spacing:-0.114px;width:117px;overflow:hidden;">Healthy (Basic Data Partition)</span>
<span class="t" style="left:316px;top:527px;letter-spacing:-0.370px;font-weight:bold;">USB &nbsp;(G:)</span>
<span class="t" style="left:316px;top:542px;letter-spacing:-0.374px;">959 MB exFAT</span>
<span class="t" style="left:316px;top:557px;letter-spacing:-0.114px;width:108px;overflow:hidden;">Healthy (Basic Data Partition)</span>
<span class="t" style="left:316px;top:640.5px;letter-spacing:-0.393px;">200 MB</span>
<span class="t" style="left:225px;top:671px;letter-spacing:-0.034px;">Unallocated</span>
<span class="t" style="left:309px;top:671px;letter-spacing:0.097px;">Primary partition</span>
<div id="clip3" class="a">
<span class="t" style="left:213px;top:654px;letter-spacing:0.052px;">Online</span>
<span class="t" style="left:316px;top:655.5px;letter-spacing:-0.180px;width:110px;overflow:hidden;">Healthy (EFI System Partition)</span>
</div>
</div>
<div id="menu" class="a">
<div class="a" style="left:424px;top:550px;width:262px;height:282px;border-radius:8px;background:#f9f9f9;box-shadow:0 0 0 1px rgba(0,0,0,.09),0 3px 8px rgba(0,0,0,.10)"></div>
<div class="a" style="left:433px;top:631px;width:244px;height:14px;border-radius:4px;background:#0078d4"></div>
<div class="ms" style="top:600px"></div>
<div class="ms" style="top:675px"></div>
<div class="ms" style="top:772px"></div>
<div class="ms" style="top:803px"></div>

<span class="t" style="left:461.5px;top:555px;letter-spacing:-0.215px;">Open</span>
<span class="t" style="left:461.5px;top:577px;letter-spacing:-0.241px;">Explore</span>
<span class="t" style="left:461.5px;top:608px;letter-spacing:-0.016px;color:#a0a0a0;">Mark Partition as Active</span>
<span class="t" style="left:461.5px;top:630px;letter-spacing:-0.212px;color:#fff;">Change Drive Letter and Paths...</span>
<span class="t" style="left:461.5px;top:652px;letter-spacing:-0.168px;">Format...</span>
<span class="t" style="left:461.5px;top:683px;letter-spacing:-0.171px;color:#a0a0a0;">Extend Volume...</span>
<span class="t" style="left:461.5px;top:705px;letter-spacing:-0.148px;color:#a0a0a0;">Shrink Volume...</span>
<span class="t" style="left:461.5px;top:727px;letter-spacing:0.049px;color:#a0a0a0;">Add Mirror...</span>
<span class="t" style="left:461.5px;top:749px;letter-spacing:-0.191px;">Delete Volume...</span>
<span class="t" style="left:461.5px;top:780px;letter-spacing:-0.170px;">Properties</span>
<span class="t" style="left:461.5px;top:811px;letter-spacing:-0.047px;">Help</span>
</div>
</body></html>
